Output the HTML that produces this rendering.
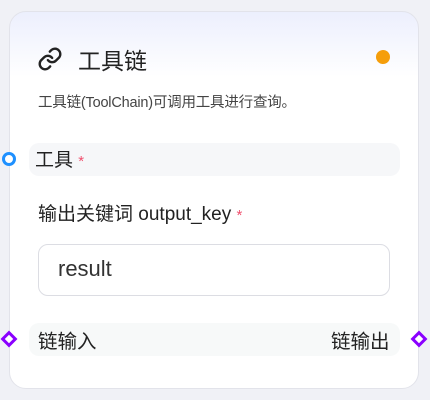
<!DOCTYPE html>
<html><head><meta charset="utf-8"><style>
*{margin:0;padding:0;box-sizing:border-box}
body{width:430px;height:400px;background:#f0f1f6;position:relative;overflow:hidden;font-family:"Liberation Sans","Noto Sans CJK SC",sans-serif;color:#222}
.card{position:absolute;left:9px;top:11px;width:410px;height:378px;border-radius:17px;border:1px solid #e2e3ea;background:linear-gradient(#eceffd 0px,#fff 65px)}
.abs{position:absolute;white-space:nowrap}
</style></head><body>
<div class="card"></div>
<svg class="abs" style="left:37px;top:46px" width="26" height="26" viewBox="0 0 24 24" fill="none" stroke="#222" stroke-width="2.2" stroke-linecap="round" stroke-linejoin="round"><path d="M10 13a5 5 0 0 0 7.5.5l3-3a5 5 0 0 0-7-7l-1.7 1.7"/><path d="M14 11a5 5 0 0 0-7.5-.5l-3 3a5 5 0 0 0 7 7l1.7-1.7"/></svg>
<div class="abs" style="left:78px;top:42px;font-size:23px;color:#222">工具链</div>
<div class="abs" style="left:376px;top:50px;width:14px;height:14px;border-radius:50%;background:#f59e0b"></div>
<div class="abs" style="left:38px;top:91px;font-size:14.5px;color:#444;letter-spacing:-0.2px">工具链(ToolChain)可调用工具进行查询。</div>
<div class="abs" style="left:29px;top:143px;width:371px;height:33px;border-radius:10px;background:#f6f7f9"></div>
<div class="abs" style="left:35px;top:145px;font-size:19px">工具 <span style="color:#f0506e;font-size:15px">*</span></div>
<div class="abs" style="left:2px;top:152px;width:14px;height:14px;border-radius:50%;border:3px solid #1e90ff;background:#fff"></div>
<div class="abs" style="left:38px;top:199px;font-size:19px">输出关键词 output_key <span style="color:#f0506e;font-size:15px">*</span></div>
<div class="abs" style="left:38px;top:244px;width:352px;height:52px;border-radius:10px;border:1px solid #dcdde3;background:#fff"></div>
<div class="abs" style="left:58px;top:256px;font-size:22px;color:#333">result</div>
<div class="abs" style="left:29px;top:323px;width:371px;height:33px;border-radius:10px;background:#f7f9f9"></div>
<div class="abs" style="left:38px;top:325px;font-size:19.5px">链输入</div>
<div class="abs" style="left:331px;top:325px;font-size:19.5px">链输出</div>
<div class="abs" style="left:3px;top:333px;width:12px;height:12px;transform:rotate(45deg);border:3px solid #8a00ff;background:#fff"></div>
<div class="abs" style="left:413px;top:333px;width:12px;height:12px;transform:rotate(45deg);border:3px solid #8a00ff;background:#fff"></div>
</body></html>
